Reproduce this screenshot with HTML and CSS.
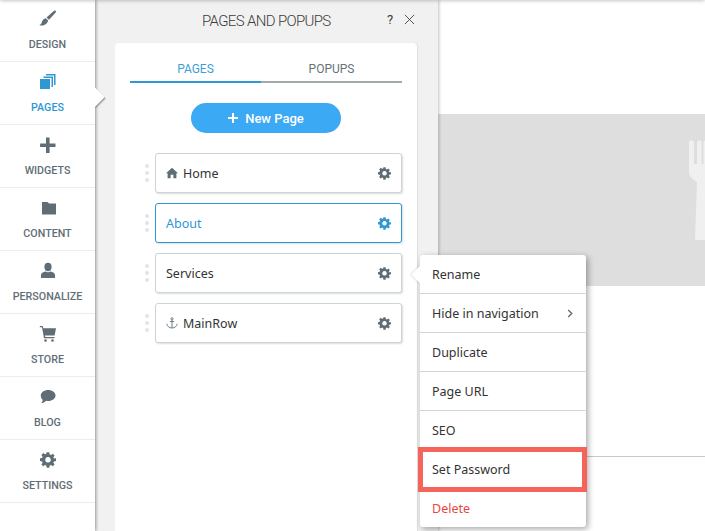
FILE: index.html
```html
<!DOCTYPE html>
<html lang="en">
<head>
<meta charset="utf-8">
<title>Pages and Popups</title>
<link rel="stylesheet" href="styles.css">
</head>
<body>
<svg class="defs" width="0" height="0">
  <symbol id="gear" viewBox="0 0 24 24"><path fill-rule="evenodd" d="M10 1h4l.6 3.1 1.9.8 2.6-1.800 2.800 2.800-1.800 2.600.8 1.900L24 10v4l-3.100.6-.8 1.900 1.800 2.600-2.800 2.800-2.600-1.800-1.900.8L14 24h-4l-.6-3.100-1.900-.8-2.600 1.800-2.800-2.800 1.800-2.600-.8-1.900L0 14v-4l3.100-.6.8-1.900-1.800-2.600 2.800-2.800 2.600 1.800 1.900-.8zM12 8a4.200 4.200 0 1 0 .01 0z" transform="translate(0 -.5)"/></symbol>
</svg>
<div class="app">
  <nav class="sidebar">
    <a class="nav-item">
      <svg class="nav-icon" viewBox="0 0 18 18"><path d="M16.500.8c.7.500.5 1.300 0 1.900L10 9.800 7.500 7.500 14.800 1c.5-.4 1.200-.6 1.700-.2zM6.800 8.200l2.400 2.300c-.6 2.700-2.700 4.400-5.200 4.900-1.200.3-2.600.2-3.700-.5 1.800-.4 2.200-1.400 2.600-2.900.5-2 1.900-3.400 3.900-3.800z"/></svg>
      <span>DESIGN</span>
    </a>
    <a class="nav-item active">
      <svg class="nav-icon" viewBox="0 0 18 18"><path d="M7 1h9.500v11H15V2.500H7zM4.500 3.500H14V14h-1.500V5h-8z"/><rect x="1" y="6" width="10" height="10"/></svg>
      <span>PAGES</span>
    </a>
    <a class="nav-item">
      <svg class="nav-icon" viewBox="0 0 18 18"><path d="M7 1.500h3.600v5.900h5.900V11h-5.900v5.900H7V11H1.100V7.400H7z"/></svg>
      <span>WIDGETS</span>
    </a>
    <a class="nav-item">
      <svg class="nav-icon" viewBox="0 0 18 18"><path d="M3 3h5.500l1.600 1.600H17v10.900H3z"/></svg>
      <span>CONTENT</span>
    </a>
    <a class="nav-item">
      <svg class="nav-icon" viewBox="0 0 18 18"><ellipse cx="9" cy="5" rx="3.600" ry="4.200"/><path d="M6.500 9.500c1.500 1 3.500 1 5 0 2.500.6 4.500 1.500 4.500 3.500v3H2v-3c0-2 2-2.900 4.500-3.500z"/></svg>
      <span>PERSONALIZE</span>
    </a>
    <a class="nav-item">
      <svg class="nav-icon" viewBox="0 0 18 18"><path d="M.8 1h3l.5 2.200H17l-1.400 7.300H6l.3 1.500h9.200v1.200H5L3 2.300H.8z"/><circle cx="6.500" cy="15.500" r="1.300"/><circle cx="13.500" cy="15.500" r="1.300"/></svg>
      <span>STORE</span>
    </a>
    <a class="nav-item">
      <svg class="nav-icon" viewBox="0 0 18 18"><path d="M9.200 2c4 0 7.300 2.400 7.300 5.500S13.200 13 9.200 13c-.8 0-1.500-.1-2.200-.2C5.800 14.200 4 15 2 15.200c1-.8 1.500-2 1.700-3.300C2.400 10.900 1.800 9.300 1.800 7.500 1.800 4.400 5.200 2 9.200 2z"/></svg>
      <span>BLOG</span>
    </a>
    <a class="nav-item">
      <svg class="nav-icon nav-gear" viewBox="0 0 24 24"><use href="#gear"/></svg>
      <span>SETTINGS</span>
    </a>
  </nav>

  <section class="panel">
    <header class="panel-head">
      <h1 class="panel-title">PAGES AND POPUPS</h1>
      <span class="help">?</span>
      <svg class="close" viewBox="0 0 12 12"><path d="M1 1l10 10M11 1L1 11"/></svg>
    </header>
    <div class="card">
      <div class="tabs">
        <div class="tab tab-on">PAGES</div>
        <div class="tab">POPUPS</div>
      </div>
      <button class="new-page" type="button">
        <svg class="plus" viewBox="0 0 10 10"><path d="M4 0h2v4h4v2H6v4H4V6H0V4h4z"/></svg>
        <span>New Page</span>
      </button>
      <ul class="page-list">
        <li class="page-row">
          <span class="grip"><i></i><i></i><i></i></span>
          <div class="page-box">
            <svg class="lead-icon" viewBox="0 0 12 12"><path d="M6 .8l6 5.400h-1.600V11.200H7.400V7.800H4.600v3.400H1.600V6.200H0z"/></svg>
            <span class="page-name">Home</span>
            <svg class="gear" viewBox="0 0 24 24"><use href="#gear"/></svg>
          </div>
        </li>
        <li class="page-row">
          <span class="grip"><i></i><i></i><i></i></span>
          <div class="page-box selected">
            <span class="page-name">About</span>
            <svg class="gear" viewBox="0 0 24 24"><use href="#gear"/></svg>
          </div>
        </li>
        <li class="page-row">
          <span class="grip"><i></i><i></i><i></i></span>
          <div class="page-box">
            <span class="page-name">Services</span>
            <svg class="gear" viewBox="0 0 24 24"><use href="#gear"/></svg>
          </div>
        </li>
        <li class="page-row">
          <span class="grip"><i></i><i></i><i></i></span>
          <div class="page-box">
            <svg class="lead-icon anchor" viewBox="0 0 12 12"><circle cx="6" cy="1.800" r="1.100"/><path d="M6 3v8M3.800 4.600h4.400M.8 6.800c.3 2.500 2.600 4.200 5.200 4.200s4.900-1.700 5.200-4.200"/></svg>
            <span class="page-name">MainRow</span>
            <svg class="gear" viewBox="0 0 24 24"><use href="#gear"/></svg>
          </div>
        </li>
      </ul>
    </div>
  </section>

  <main class="canvas">
    <div class="hero">
      <svg class="fork" viewBox="0 0 28 100"><path d="M1 2c0-2 5-2 5 0v22h3V2c0-2 4.500-2 4.500 0v22h2V2c0-2 4.500-2 4.500 0v22h2.500V2c0-2 4.500-2 4.500 0v30c0 4-3 8-7 10l1 58H7l2-58c-4-2-8-6-8-10z"/></svg>
    </div>
    <div class="rule"></div>
  </main>

  <ul class="menu">
    <li class="menu-item">Rename</li>
    <li class="menu-item">Hide in navigation
      <svg class="chev" viewBox="0 0 6 10"><path d="M1 1l4 4-4 4"/></svg>
    </li>
    <li class="menu-item">Duplicate</li>
    <li class="menu-item">Page URL</li>
    <li class="menu-item">SEO</li>
    <li class="menu-item">Set Password</li>
    <li class="menu-item danger">Delete</li>
  </ul>
  <div class="highlight"></div>
</div>
</body>
</html>
```
FILE: styles.css
```css
* { box-sizing: border-box; }
html, body { margin: 0; padding: 0; }
body { width: 705px; height: 531px; overflow: hidden; background: #fff; font-family: "Roboto", sans-serif; }
.defs { position: absolute; }
.app { position: relative; display: flex; width: 705px; height: 531px; overflow: hidden; }
.app::before { content: ""; position: absolute; z-index: 5; left: 0; right: 0; top: -4px; height: 4px; box-shadow: 0 0 4px rgba(0,0,0,.35); }

.sidebar { position: relative; z-index: 3; flex: 0 0 95px; background: #fff; box-shadow: 1px 0 3px rgba(0,0,0,.4); display: flex; flex-direction: column; }
.nav-item { position: relative; height: 63px; flex: none; display: flex; flex-direction: column; align-items: center; border-bottom: 1px solid #ececec; color: #5f6e76; font-size: 10.700px; font-weight: 500; padding-top: 11px; }
.nav-item:first-child { height: 62px; padding-top: 10px; }
.nav-item span { position: absolute; top: 39px; left: 0; right: 0; text-align: center; line-height: 13px; }
.nav-item:first-child span { top: 38px; }
.nav-icon { width: 18px; height: 18px; fill: currentColor; }
.nav-gear { width: 16px; height: 16px; margin-top: 1px; }
.active { color: #2f97d2; }
.active::after { content: ""; position: absolute; right: -7px; top: 28px; width: 14px; height: 14px; background: #fff; transform: rotate(45deg); box-shadow: 1px 0 2px rgba(0,0,0,.55); clip-path: polygon(0 0, 150% 0, 150% 150%, 100% 100%); }

.panel { position: relative; z-index: 2; flex: 0 0 343px; background: #f1f1f1; box-shadow: 1px 0 3px rgba(0,0,0,.25); padding: 0 21px 0 20px; display: flex; flex-direction: column; }
.panel-head { position: relative; height: 43px; flex: none; }
.panel-title { margin: 0; position: absolute; left: 87px; top: 12px; font-size: 15px; font-weight: 300; line-height: 18px; color: #3c3c3c; letter-spacing: -.65px; white-space: nowrap; }
.help { position: absolute; left: 272px; top: 12px; font-size: 13px; line-height: 16px; color: #3c3c3c; }
.close { position: absolute; left: 289px; top: 14px; width: 11px; height: 11px; fill: none; stroke: #444; stroke-width: 1; }

.card { flex: 1; background: #fff; border-radius: 4px 4px 0 0; padding: 18px 15px 0 15px; box-shadow: 1px 0 1px rgba(0,0,0,.08); }
.tabs { display: flex; height: 22px; }
.tab { flex: 1; text-align: center; font-size: 12px; line-height: 17px; font-weight: 400; color: #657379; border-bottom: 2px solid #a2aaad; }
.tab-on { color: #3d9fd6; border-bottom-color: #2f97d2; flex: 0 0 131px; }
.new-page { display: flex; align-items: center; justify-content: center; gap: 7px; width: 150px; height: 30px; margin: 20px auto 0; background: #3ba9f3; color: #fff; border: 0; border-radius: 15px; font-family: "Roboto", sans-serif; font-size: 13px; font-weight: 500; padding: 0; }
.plus { width: 10px; height: 10px; fill: #fff; }

.page-list { list-style: none; margin: 20px 0 0; padding: 0; display: flex; flex-direction: column; gap: 10px; }
.page-row { display: flex; align-items: center; height: 40px; }
.grip { flex: 0 0 25px; padding: 0 0 0 15px; display: flex; flex-direction: column; gap: 3.500px; }
.grip i { display: block; width: 4px; height: 3.500px; background: #e4e4e4; border-radius: 2px; }
.page-box { flex: none; width: 247px; height: 40px; display: flex; align-items: center; padding: 0 10px; background: #fff; border: 1px solid #ccd4d8; border-radius: 3px; box-shadow: 1px 1px 2px rgba(0,0,0,.14); font-family: "Noto Sans", sans-serif; font-size: 12.500px; color: #333; }
.page-name { flex: 1; }
.lead-icon { flex: none; width: 12px; height: 12px; margin-right: 5px; fill: #5f6e76; }
.anchor { fill: none; stroke: #6f7e86; stroke-width: 1; }
.gear { flex: none; width: 13px; height: 13px; fill: #5f6e76; }
.selected { border-color: #2f97d2; color: #2f97d2; }
.selected .gear { fill: #2f97d2; }

.canvas { flex: 1; background: #fff; padding-top: 114px; position: relative; z-index: 1; }
.hero { height: 172px; background: #dedede; position: relative; overflow: hidden; }
.fork { position: absolute; left: 250px; top: 26px; width: 28px; height: 100px; fill: #f0f0f0; }
.rule { height: 1px; background: #c9c9c9; margin-top: 170px; }

.menu { position: absolute; z-index: 4; left: 420px; top: 255px; width: 166px; margin: 0; padding: 0; list-style: none; background: #fff; border-radius: 3px; box-shadow: 2px 2px 6px rgba(0,0,0,.35); font-family: "Noto Sans", sans-serif; font-size: 12.500px; color: #333; }
.menu::before { content: ""; position: absolute; left: -6.500px; top: 12.500px; width: 13px; height: 13px; background: #fff; transform: rotate(45deg); box-shadow: -1px 1px 2px rgba(0,0,0,.1); clip-path: polygon(0 0, 100% 100%, 100% 150%, -50% 150%, -50% 0); }
.menu-item { position: relative; height: 39px; padding: 0 12px; border-bottom: 1px solid #ced6da; display: flex; justify-content: space-between; align-items: center; }
.menu-item:last-child { border-bottom: 0; height: 38px; }
.danger { color: #e8483f; }
.chev { width: 6px; height: 9px; margin-right: 1px; fill: none; stroke: #5f6e76; stroke-width: 1.500; }
.highlight { position: absolute; z-index: 5; left: 418px; top: 447px; width: 169px; height: 45px; border: 5px solid #f4645a; }
```
